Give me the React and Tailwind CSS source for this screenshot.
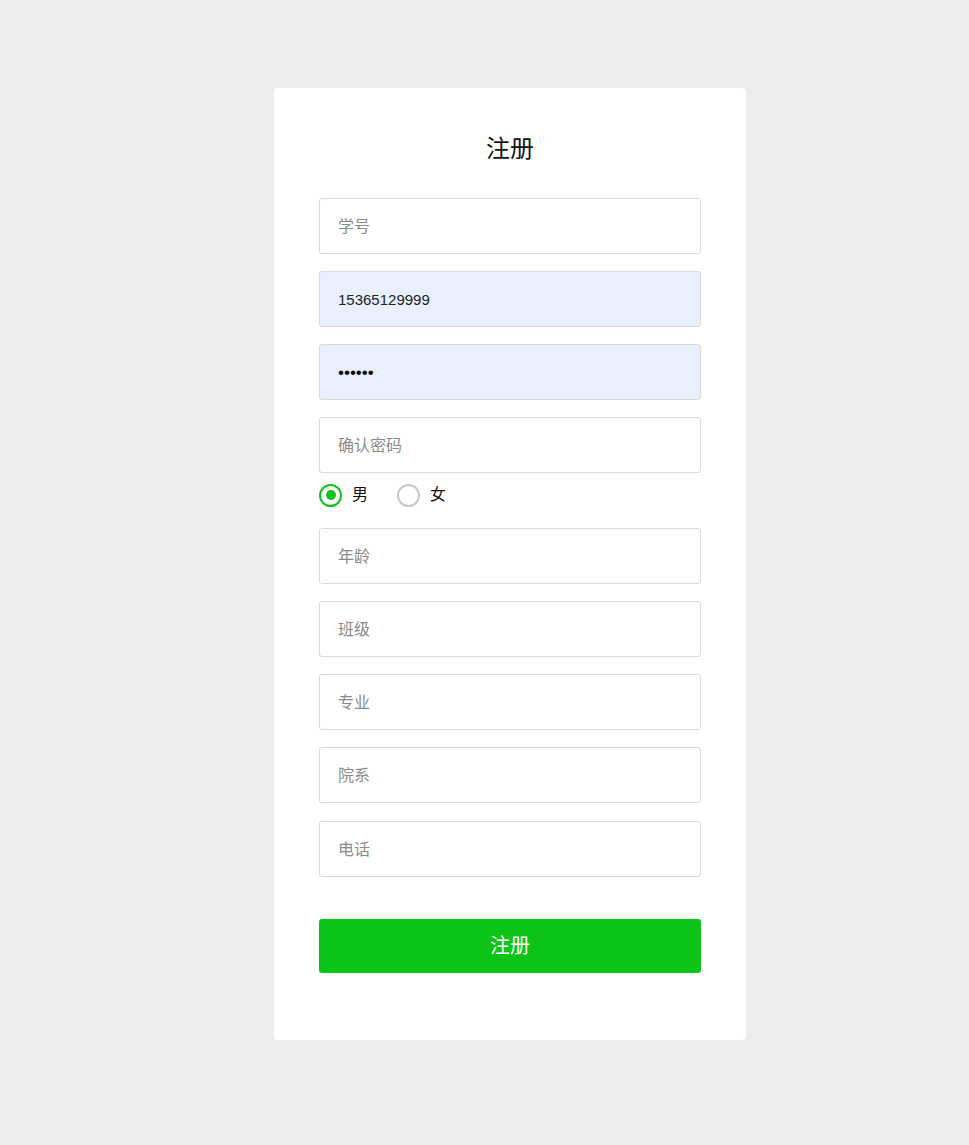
import React from 'react'

const FONT = { fontFamily: '"Liberation Sans", "Noto Sans CJK SC", sans-serif' }

const TOP = [
  { ph: '学号' },
  { value: '15365129999', filled: true },
  { value: '••••••', filled: true, dots: true },
  { ph: '确认密码' },
]

const BOTTOM = ['年龄', '班级', '专业', '院系', '电话']

function Field({ ph, value, filled, dots }) {
  return (
    <div
      className={`h-[56px] w-full rounded-[3px] border border-[#d9d9d9] flex items-center pl-[18px] pt-[2px] text-[16px] ${
        filled ? 'bg-[#e8f0fe]' : 'bg-white'
      }`}
    >
      {value ? (
        <span className={dots ? 'text-[#111] text-[17px]' : 'text-[#222] text-[15px]'}>{value}</span>
      ) : (
        <span className="text-[#8a8a8a]">{ph}</span>
      )}
    </div>
  )
}

function Radio({ checked, label }) {
  return (
    <div className="flex items-center">
      <span
        className={`w-[23px] h-[23px] rounded-full border-2 flex items-center justify-center ${
          checked ? 'border-[#0fc31c]' : 'border-[#c8c8c8]'
        }`}
      >
        {checked && <span className="w-[10px] h-[10px] rounded-full bg-[#0fc31c]" />}
      </span>
      <span className="ml-[10px] text-[16px] text-[#111]">{label}</span>
    </div>
  )
}

export default function App() {
  return (
    <div className="min-h-screen bg-[#ededed] pt-[88px] pb-[105px]" style={FONT}>
      <div className="ml-[274px] w-[472px] bg-white rounded-[4px] px-[45px] pt-[44px] pb-[67px]">
        <h1 className="h-[34px] flex items-center justify-center text-[24px] text-[#111]">注册</h1>

        <div className="mt-[32px] flex flex-col gap-[17px]">
          {TOP.map((f, i) => (
            <Field key={i} {...f} />
          ))}
        </div>

        <div className="mt-[11px] h-[22px] flex items-center gap-[29px]">
          <Radio checked label="男" />
          <Radio label="女" />
        </div>

        <div className="mt-[22px] flex flex-col gap-[17px]">
          {BOTTOM.map((ph, i) => (
            <div key={ph} className={i === 4 ? 'pt-px' : ''}>
              <Field ph={ph} />
            </div>
          ))}
        </div>

        <button className="mt-[42px] w-full h-[54px] rounded-[3px] bg-[#0cc418] text-white text-[20px]">
          注册
        </button>
      </div>
    </div>
  )
}
